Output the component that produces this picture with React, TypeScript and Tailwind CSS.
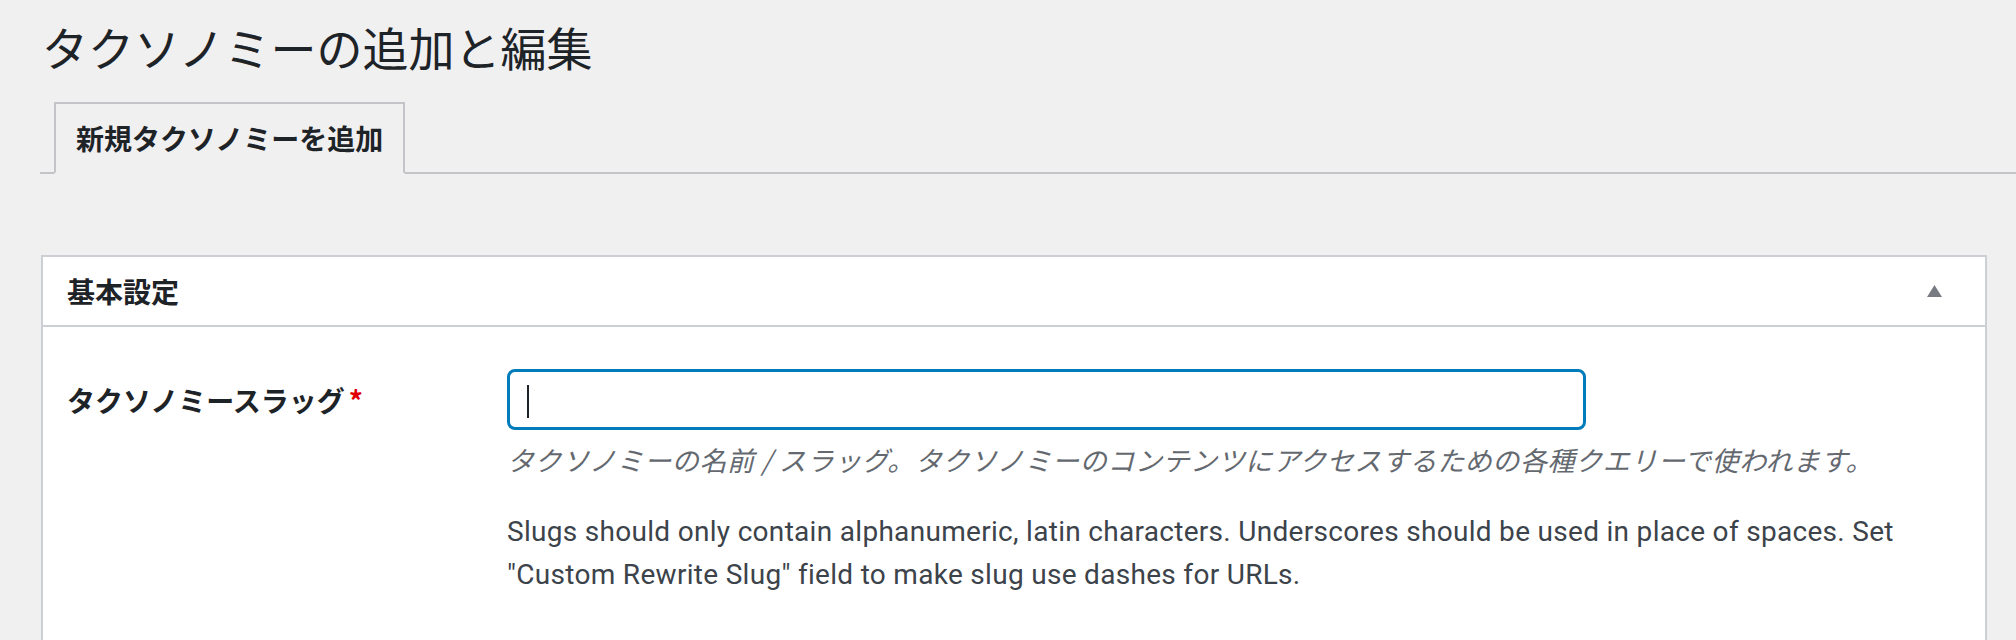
export default function App() {
  return (
    <div className="h-[640px] w-[2016px] overflow-hidden bg-[#f0f0f1] font-['Roboto','Noto_Sans_CJK_JP',sans-serif] text-[#1d2327]">
      {/* page title */}
      <h1 className="pl-[42px] pt-[16px] text-[46px] leading-[60px] font-normal text-[#1d2327] font-['Noto_Sans_CJK_JP',sans-serif]">
        タクソノミーの追加と編集
      </h1>

      {/* tabs */}
      <div className="ml-[40px] mt-[26px] flex border-b-2 border-[#c3c4c7]">
        <div className="ml-[14px] -mb-[2px] flex h-[72px] items-center border-2 border-b-[#f0f0f1] border-[#c3c4c7] bg-[#f0f0f1] px-[20px] text-[28px] font-bold text-[#1d2327] font-['Noto_Sans_CJK_JP',sans-serif]">
          新規タクソノミーを追加
        </div>
      </div>

      {/* postbox */}
      <div className="ml-[41px] mr-[29px] mt-[81px] border-2 border-[#ccd0d4] bg-white">
        <div className="flex h-[70px] items-center justify-between border-b-2 border-[#ccd0d4] pl-[24px] pr-[43px]">
          <h2 className="text-[28px] font-bold font-['Noto_Sans_CJK_JP',sans-serif]">基本設定</h2>
          <svg width="15" height="12" viewBox="0 0 15 12">
            <polygon points="7.5,0 15,12 0,12" fill="#787c82" />
          </svg>
        </div>

        <div className="flex pl-[24px] pt-[42px] pb-[80px]">
          <div className="flex h-[61px] w-[440px] shrink-0 items-center text-[28px] font-bold font-['Noto_Sans_CJK_JP',sans-serif]">
            タクソノミースラッグ
            <span className="ml-[4px] text-[#e00000]">*</span>
          </div>
          <div className="flex flex-col">
            <div className="relative h-[61px] w-[1079px] rounded-[8px] border-[3px] border-[#007cba] bg-white">
              <span className="absolute left-[17px] top-[13px] h-[33px] w-[2px] bg-[#1d2327]" />
            </div>
            <p className="mt-[10px] whitespace-nowrap text-[27px] leading-[40px] tracking-[0.6px] italic text-[#646970] font-['Noto_Sans_CJK_JP',sans-serif]">
              タクソノミーの名前 / スラッグ。タクソノミーのコンテンツにアクセスするための各種クエリーで使われます。
            </p>
            <p className="mt-[30px] w-[1445px] text-[28px] leading-[43px] tracking-[0.3px] text-[#3c434a]">
              Slugs should only contain alphanumeric, latin characters. Underscores should be used in place of spaces. Set "Custom Rewrite Slug" field to make slug use dashes for URLs.
            </p>
          </div>
        </div>
      </div>
    </div>
  );
}
